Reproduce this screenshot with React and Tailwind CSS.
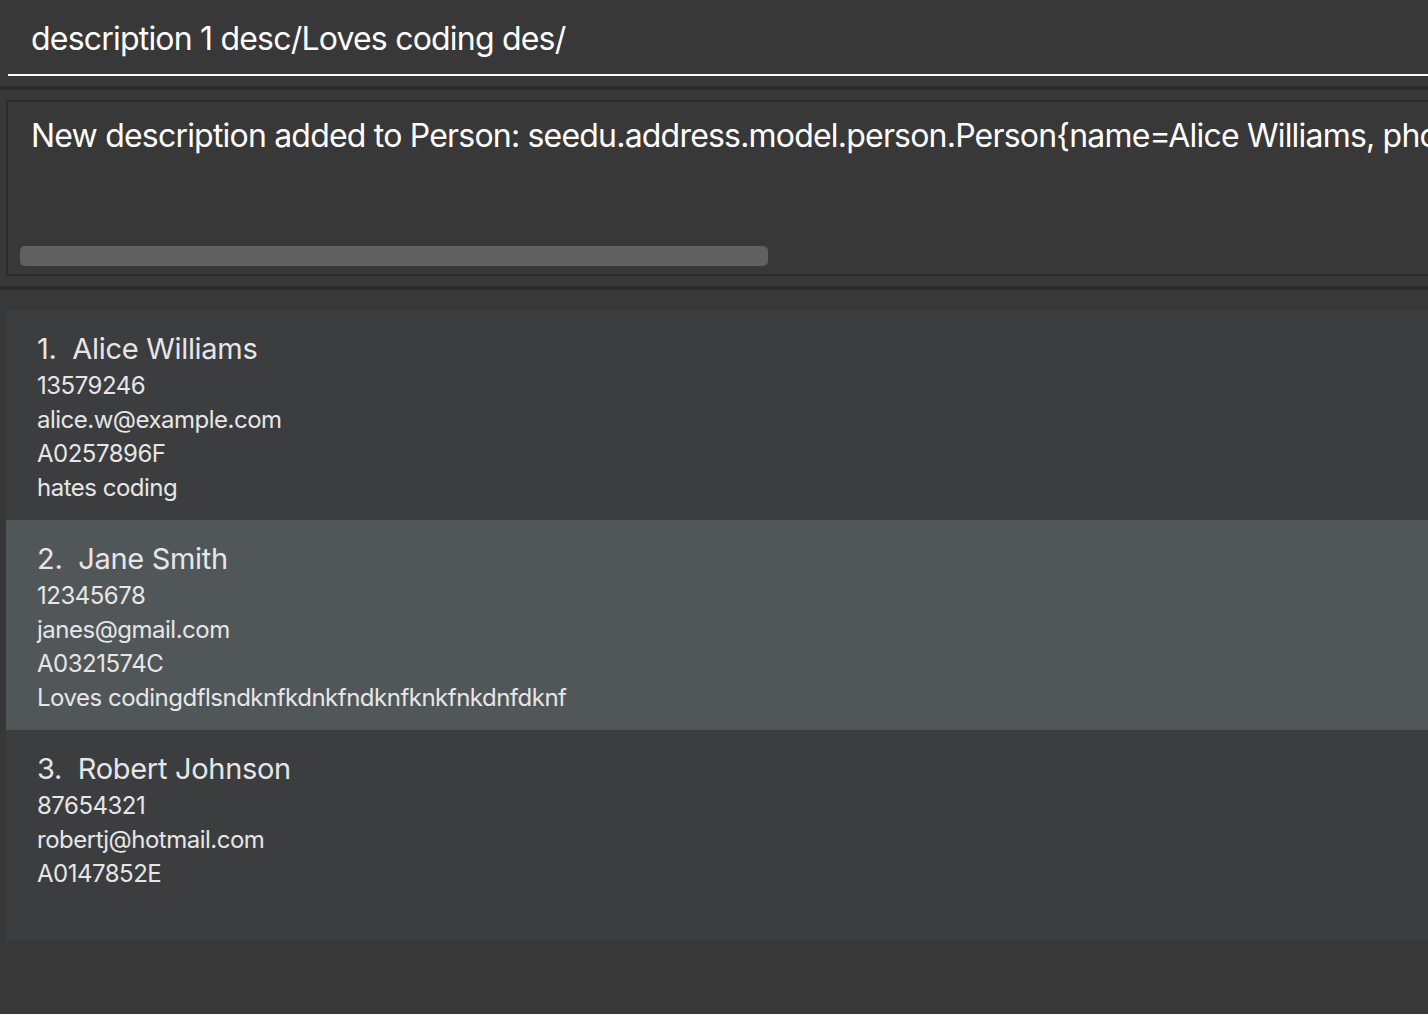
const PEOPLE = [
    { name: 'Alice Williams', phone: '13579246', email: 'alice.w@example.com', id: 'A0257896F', desc: 'hates coding' },
    { name: 'Jane Smith', phone: '12345678', email: 'janes@gmail.com', id: 'A0321574C', desc: 'Loves codingdflsndknfkdnkfndknfknkfnkdnfdknf' },
    { name: 'Robert Johnson', phone: '87654321', email: 'robertj@hotmail.com', id: 'A0147852E', desc: '' },
];

function PersonCard({ index, person, selected }) {
    return (
        <div className={`h-[210px] pl-[31px] pt-[19px] ${selected ? 'bg-[#515759]' : 'bg-[#3c3d3f]'}`}>
            <p className="text-[29px] leading-[40px] text-[#e6e6e6] tracking-[-0.3px]">
                {index}.&nbsp;&nbsp;{person.name}
            </p>
            {[person.phone, person.email, person.id, person.desc].filter(Boolean).map((line, i) => (
                <p key={i} className="text-[24px] leading-[34px] text-[#e6e6e6] tracking-[-0.5px]">{line}</p>
            ))}
        </div>
    );
}

export default function App() {
    return (
        <div className="h-[1014px] w-[1428px] overflow-hidden bg-[#383838] font-['Inter',sans-serif]">
            {/* Command box */}
            <div className="h-[86px] pl-[8px]">
                <div className="h-[76px] overflow-hidden border-b-2 border-white pl-[23px] pt-[19px]">
                    <p className="text-[32px] leading-[40px] text-white tracking-[-0.8px] whitespace-nowrap">description 1 desc/Loves coding des/</p>
                </div>
            </div>
            <div className="h-[4px] bg-[#2b2b2b]" />

            {/* Result display */}
            <div className="h-[196px] pl-[6px] pt-[10px]">
                <div className="relative h-[176px] overflow-hidden border-2 border-r-0 border-[#2b2b2b] pl-[23px] pt-[14px]">
                    <p className="text-[32px] leading-[40px] text-white tracking-[-0.8px] whitespace-nowrap">
                        New description added to Person: seedu.address.model.person.Person{'{'}name=Alice Williams, pho
                    </p>
                    <div className="absolute left-[12px] top-[144px] h-[20px] w-[748px] rounded-[5px] bg-[#606060]" />
                </div>
            </div>
            <div className="h-[4px] bg-[#2b2b2b]" />

            {/* Person list */}
            <div className="pl-[6px] pt-[20px]">
                {PEOPLE.map((p, i) => (
                    <PersonCard key={i} index={i + 1} person={p} selected={i === 1} />
                ))}
            </div>
        </div>
    );
}
